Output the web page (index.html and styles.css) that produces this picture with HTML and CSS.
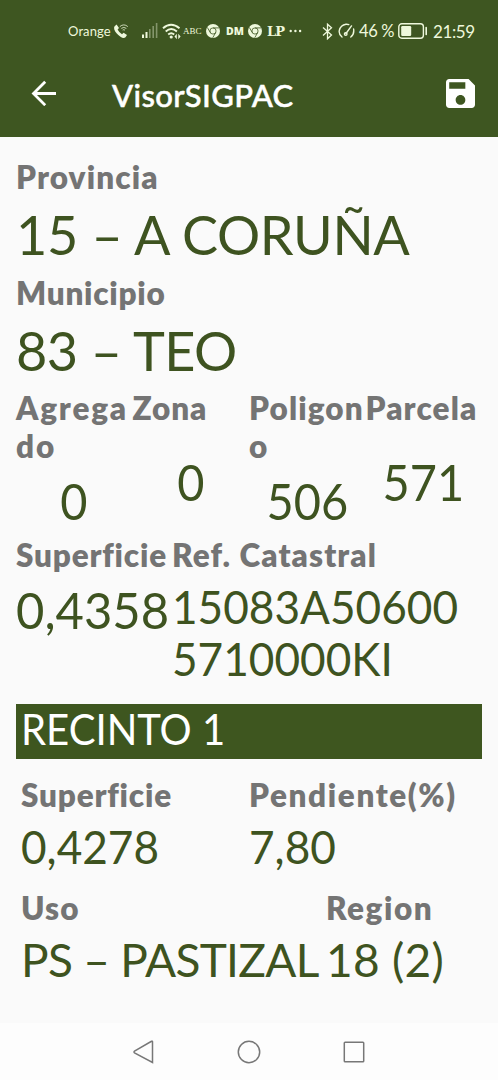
FILE: index.html
```
<!DOCTYPE html>
<html lang="es">
<head>
<meta charset="utf-8">
<title>VisorSIGPAC</title>
<link rel="stylesheet" href="styles.css">
</head>
<body>
<div class="screen">
  <header class="top">
    <div class="status">
      <span class="carrier">Orange</span>
      <svg class="i-call" width="16" height="16" viewBox="0 0 16 16"><path d="M1.600 3.200 3.600 1.600 6 5 4.600 6.600q1.400 3 4.400 4.600L10.600 9.800 14 12l-1.500 2.300q-2 1.400-5-.6Q2.700 10.500 1.300 6.500.7 4.300 1.600 3.200Z" fill="currentColor"/><path d="M6.800 3.600q4-3.400 8 0M8.300 5.400q2.500-2 5 0M9.700 7.100q1.100-.8 2.200 0" fill="none" stroke="currentColor" stroke-width=".8"/></svg>
      <svg class="i-signal" width="17" height="16" viewBox="0 0 17 16"><path d="M1 11.500h2V15H1zM4.500 9h2v6h-2z" fill="currentColor"/><path d="M8 6h1.600v9H8zM11.400 3H13v12h-1.600zM14.800 0h1.600v15h-1.600z" fill="currentColor" opacity=".4"/></svg>
      <svg class="i-wifi" width="20" height="17" viewBox="0 0 20 17"><g fill="none" stroke="currentColor" stroke-width="1.900"><path d="M1 5.200q8-7 16.500 0M3.700 8.400q5.500-4.600 11.200 0M6.200 11.500q3-2.600 6 0"/></g><circle cx="9.200" cy="14" r="1.600" fill="currentColor"/><path d="m14.800 10.800-2.300 2.700 2.300 2.700zm1.500 0 2.300 2.700-2.300 2.700z" fill="currentColor"/></svg>
      <span class="abc">ABC</span>
      <svg class="i-chrome" width="14" height="14" viewBox="0 0 14 14"><circle cx="7" cy="7" r="7" fill="currentColor"/><g fill="none" stroke="#3e5621" stroke-width=".8"><circle cx="7" cy="7" r="3.100"/><path d="M7 3.900h6M4.300 8.600 1.300 3.400M9.700 8.600l-3 5.200"/></g></svg>
      <span class="dm">DM</span>
      <svg class="i-chrome i-chrome-2" width="14" height="14" viewBox="0 0 14 14"><circle cx="7" cy="7" r="7" fill="currentColor"/><g fill="none" stroke="#3e5621" stroke-width=".8"><circle cx="7" cy="7" r="3.100"/><path d="M7 3.900h6M4.300 8.600 1.300 3.400M9.700 8.600l-3 5.200"/></g></svg>
      <span class="lp">LP</span>
      <svg class="i-dots" width="13" height="4" viewBox="0 0 13 4" fill="currentColor"><circle cx="1.700" cy="2" r="1.200"/><circle cx="6.400" cy="2" r="1.200"/><circle cx="11.100" cy="2" r="1.200"/></svg>
      <svg class="i-bt" width="11" height="17" viewBox="0 0 11 17" fill="none" stroke="currentColor" stroke-width="1.300"><path d="m1 4.500 8.500 7.500-4 3.800V1.200l4 3.600L1 12.500"/></svg>
      <svg class="i-gauge" width="17" height="16" viewBox="0 0 17 16" fill="none" stroke="currentColor" stroke-width="1.400" stroke-linecap="round"><path d="M4 14Q.6 11.500 1.300 7.500 2.500 2 8 1.200q1.600-.1 2.800.4M15.600 6q.9 5-2.800 8M8 10.500l5.500-7.600"/><circle cx="7.700" cy="11" r="1.300"/></svg>
      <span class="pct">46 %</span>
      <svg class="i-bat" width="30" height="16" viewBox="0 0 30 16"><rect x=".8" y=".8" width="24.600" height="14.400" rx="3" fill="none" stroke="currentColor" stroke-width="1.400"/><rect x="3.200" y="3" width="10" height="10" rx="1.200" fill="currentColor"/><path d="M28.200 4.500v7" stroke="currentColor" stroke-width="1.600" stroke-linecap="round"/></svg>
      <span class="clock">21:59</span>
    </div>
    <div class="bar">
      <svg class="back" width="26" height="26" viewBox="0 0 26 26" fill="none" stroke="#fff" stroke-width="2.800"><path d="M25 13.500H2.500M14.200 1.800 2.500 13.500l11.700 11.700"/></svg>
      <h1 class="title">VisorSIGPAC</h1>
      <svg class="save" width="29" height="29" viewBox="3 3 18 18"><path fill="#fff" d="M17 3H5c-1.110 0-2 .9-2 2v14c0 1.100.89 2 2 2h14c1.100 0 2-.9 2-2V7l-4-4zm-5 16c-1.660 0-3-1.340-3-3s1.340-3 3-3 3 1.340 3 3-1.340 3-3 3zm3-10H5V5h10v4z"/></svg>
    </div>
  </header>

  <main class="content">
    <div class="label">Provincia</div>
    <div class="value big"><span class="t-coruna">15 – A CORUÑA</span></div>
    <div class="label t-muni">Municipio</div>
    <div class="value big big-last"><span class="t-teo">83 – TEO</span></div>

    <div class="quad">
      <div class="cell"><div class="label t-agr">Agrega<br>do</div><div class="num"><span>0</span></div></div>
      <div class="cell"><div class="label t-zona">Zona</div><div class="num"><span>0</span></div></div>
      <div class="cell"><div class="label">Poligon<br>o</div><div class="num"><span>506</span></div></div>
      <div class="cell"><div class="label">Parcela</div><div class="num"><span>571</span></div></div>
    </div>

    <div class="ref-row">
      <div><div class="label t-sup">Superficie</div><div class="value area"><span class="digits">0,4358</span></div></div>
      <div><div class="label">Ref. Catastral</div><div class="value ref"><span class="digits">15083A50600<br>5710000KI</span></div></div>
    </div>

    <h2 class="recinto"><span class="t-rec">RECINTO 1</span></h2>

    <div class="pair half">
      <div><div class="label t-sup">Superficie</div><div class="value small"><span class="digits">0,4278</span></div></div>
      <div><div class="label t-pend">Pendiente(%)</div><div class="value small"><span class="digits">7,80</span></div></div>
    </div>
    <div class="pair wide">
      <div><div class="label">Uso</div><div class="value small"><span class="t-ps">PS – PASTIZAL</span></div></div>
      <div><div class="label t-reg">Region</div><div class="value small"><span class="t-18">18 (2)</span></div></div>
    </div>
  </main>

  <nav class="nav">
    <svg width="24" height="26" viewBox="0 0 24 26"><path d="M20.500 2.500v21L2.500 13.800q-1-.8 0-1.600L19.500 2.300q1-.4 1 .6Z"/></svg>
    <svg width="24" height="26" viewBox="0 0 24 26"><circle cx="12" cy="13" r="10.700"/></svg>
    <svg width="24" height="26" viewBox="0 0 24 26"><rect x="2.300" y="3.300" width="19.400" height="19.400" rx=".8"/></svg>
  </nav>
</div>
</body>
</html>
```
FILE: styles.css
```
* { box-sizing: border-box; }
body { margin: 0; font-family: Lato, "Open Sans", sans-serif; background: #fafafa; font-variant-ligatures: none; }
.screen { width: 498px; height: 1080px; display: flex; flex-direction: column; overflow: hidden; }
svg { display: block; flex: none; }

.top { height: 137px; background: #3e5621; color: #eef8dc; flex: none; }
.status { height: 62px; display: flex; align-items: center; padding-left: 68px; white-space: nowrap; }
.status > * { flex: none; }
.carrier { width: 45px; font-size: 13px; letter-spacing: .1px; }
.i-call { margin-right: 12px; }
.i-signal { margin-right: 4px; }
.abc { width: 22px; margin-left: 1px; font: 9px "Liberation Serif", serif; }
.i-chrome { margin: 0 6px 0 1px; }
.dm { width: 22px; font: 800 10.500px "Open Sans", sans-serif; }
.i-chrome-2 { margin: 0 5px 0 0; }
.lp { width: 22px; font: bold 13px "DejaVu Serif", serif; letter-spacing: -.8px; }
.i-dots { margin-right: 20px; }
.i-bt { margin-right: 5px; }
.i-gauge { margin-right: 4px; }
.pct { width: 39px; font-size: 16.500px; letter-spacing: -.4px; }
.i-bat { margin-right: 5px; }
.clock { font-size: 17px; letter-spacing: -.4px; }

.bar { height: 75px; display: flex; align-items: center; padding: 0 23px 13px 31px; }
.title { margin: 3px auto 0 55px; color: #fff; font-size: 31px; font-weight: 500; line-height: 40px; letter-spacing: .35px; -webkit-text-stroke: .5px #fff; }

.content { flex: 1; padding: 21px 16px 0; color: #3e5320; white-space: nowrap; }
.label { font-size: 31.500px; line-height: 38px; font-weight: 800; letter-spacing: 1.100px; color: #747474; }
.t-muni { letter-spacing: .75px; }
.t-agr { letter-spacing: 1.800px; }
.t-zona { letter-spacing: .9px; }
.t-sup { letter-spacing: .8px; }
.t-pend { letter-spacing: 1.600px; }
.t-reg { letter-spacing: 1.500px; }
.value { color: #3e5320; }
.big { font-size: 54px; line-height: 78px; }
.big-last { line-height: 77px; }
.t-coruna { letter-spacing: -.35px; }
.t-teo { letter-spacing: -.6px; }

.quad { display: grid; grid-template-columns: repeat(4, 1fr); height: 147px; }
.cell { display: flex; flex-direction: column; }
.num { flex: 1; display: flex; align-items: center; justify-content: center; font-size: 51px; line-height: 70px; }
.num span { transform: scaleX(.92); }

.digits { display: inline-block; transform: scaleX(.96); transform-origin: left; }
.ref-row { display: grid; grid-template-columns: 156px 1fr; height: 167.500px; }
.area { font-size: 51px; line-height: 72px; }
.ref { font-size: 46px; line-height: 52.500px; padding-top: 6.500px; }

.recinto { margin: 0 0 17px; height: 55.500px; padding-left: 5px; background: #3e561f; color: #fff; font-size: 42.500px; font-weight: 400; line-height: 50px; }
.t-rec { display: inline-block; transform: scaleX(.943); transform-origin: left; }

.pair { display: grid; padding-left: 5px; height: 113px; }
.half { grid-template-columns: 228px 1fr; }
.wide { grid-template-columns: 305px 1fr; }
.small { font-size: 46px; line-height: 66px; }
.t-ps { letter-spacing: -.7px; }
.t-18 { letter-spacing: .3px; }

.nav { height: 57px; flex: none; background: #fdfdfd; display: flex; justify-content: center; align-items: center; gap: 81px; }
.nav svg { fill: none; stroke: #777; stroke-width: 1.500; }
```
